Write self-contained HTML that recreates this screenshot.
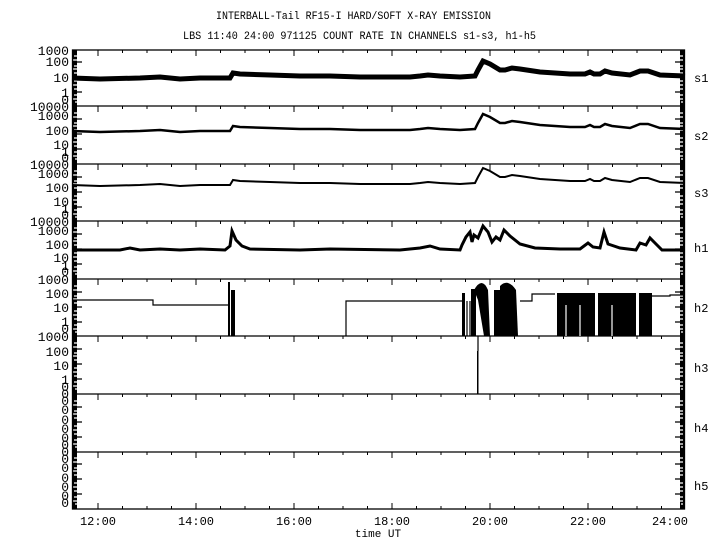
<!DOCTYPE html>
<html><head><meta charset="utf-8"><style>
html,body{margin:0;padding:0;background:#fff;width:720px;height:550px;overflow:hidden}
svg{display:block}
text{font-family:"Liberation Mono",monospace;fill:#000}
</style></head><body>
<svg width="720" height="550" viewBox="0 0 720 550" xmlns="http://www.w3.org/2000/svg">
<g font-size="11">
<text x="216" y="19" textLength="275" lengthAdjust="spacingAndGlyphs">INTERBALL-Tail RF15-I HARD/SOFT X-RAY EMISSION</text>
<text x="183" y="39" textLength="353" lengthAdjust="spacingAndGlyphs">LBS 11:40 24:00 971125  COUNT RATE IN CHANNELS s1-s3, h1-h5</text>
</g>
<!-- dense edge tick columns -->
<rect x="72" y="50" width="5" height="459" fill="#000"/>
<rect x="680" y="50" width="5" height="459" fill="#000"/>
<g stroke="#fff" stroke-width="1.2">
<path id="gp" d="M74 56h3M73 60h4M74 66h3M73 69h4M74 73h3M74 81h3M73 85h4M74 89h3M74 95h3M73 99h4M75 102h2"/>
<use href="#gp" y="57"/><use href="#gp" y="115"/><use href="#gp" y="172"/><use href="#gp" y="230"/><use href="#gp" y="287"/><use href="#gp" y="345"/><use href="#gp" y="402"/>
<use href="#gp" x="606"/><use href="#gp" x="606" y="57"/><use href="#gp" x="606" y="115"/><use href="#gp" x="606" y="172"/><use href="#gp" x="606" y="230"/><use href="#gp" x="606" y="287"/><use href="#gp" x="606" y="345"/><use href="#gp" x="606" y="402"/>
</g>
<g stroke="#000" stroke-width="1.2">
<path id="lg" d="M72 62h10M72 77h10M72 92h10M675 62h10M675 77h10M675 92h10"/>
<use href="#lg" y="57"/><use href="#lg" y="115"/><use href="#lg" y="172"/><use href="#lg" y="230"/><use href="#lg" y="287"/><use href="#lg" y="345"/><use href="#lg" y="402"/>
</g>
<g stroke="#000" stroke-width="1.3" fill="none">
<rect x="72.5" y="50" width="612" height="459"/>
<line x1="72" y1="106" x2="685" y2="106"/>
<line x1="72" y1="164" x2="685" y2="164"/>
<line x1="72" y1="221" x2="685" y2="221"/>
<line x1="72" y1="279" x2="685" y2="279"/>
<line x1="72" y1="336" x2="685" y2="336"/>
<line x1="72" y1="394" x2="685" y2="394"/>
<line x1="72" y1="452" x2="685" y2="452"/>
</g>
<g stroke="#000" stroke-width="1">
<path id="tk" d="M98 50v6M122.5 50v3M147 50v3M171.5 50v3M196 50v6M220.5 50v3M245 50v3M269.5 50v3M294 50v6M318.5 50v3M343 50v3M367.5 50v3M392 50v6M416.5 50v3M441 50v3M465.5 50v3M490 50v6M514.5 50v3M539 50v3M563.5 50v3M588 50v6M612.5 50v3M637 50v3M661.5 50v3"/>
<use href="#tk" y="56"/><use href="#tk" y="114"/><use href="#tk" y="171"/><use href="#tk" y="229"/><use href="#tk" y="286"/><use href="#tk" y="344"/><use href="#tk" y="402"/>
<path d="M98 509v-6M122.5 509v-3M147 509v-3M171.5 509v-3M196 509v-6M220.5 509v-3M245 509v-3M269.5 509v-3M294 509v-6M318.5 509v-3M343 509v-3M367.5 509v-3M392 509v-6M416.5 509v-3M441 509v-3M465.5 509v-3M490 509v-6M514.5 509v-3M539 509v-3M563.5 509v-3M588 509v-6M612.5 509v-3M637 509v-3M661.5 509v-3"/>
</g>
<defs>
<polyline id="base" fill="none" stroke="#000" points="72,0 100,1 140,0 160,-1 180,1 200,0 230,0 233,-5 240,-4 270,-3 300,-2 330,-2 360,-1 410,-1 420,-2 428,-3 440,-2 460,-1 475,-2 478,-8 483,-17 490,-14 500,-8 505,-8 512,-10 520,-9 540,-6 570,-4 585,-4 590,-6 594,-4 600,-4 605,-7 612,-5 630,-3 640,-7 648,-7 660,-3 685,-2"/>
</defs>
<use href="#base" y="78" stroke-width="5"/>
<use href="#base" y="131" stroke-width="2.5"/>
<use href="#base" y="185" stroke-width="2"/>
<polyline fill="none" stroke="#000" stroke-width="3" points="72,250 120,250 130,248 140,250 160,249 180,250 200,249 225,250 230,246 232,231 236,240 242,246 250,249 300,250 330,249 400,250 420,248 430,246 440,249 460,250 462,245 466,237 470,232 472,242 474,235 478,238 483,226 488,232 492,242 496,237 500,240 504,230 510,236 520,244 535,248 560,249 580,249 588,243 593,247 600,248 604,232 608,244 620,248 636,250 640,243 646,245 650,238 656,244 662,250 685,250"/>
<g stroke="#000" fill="none" stroke-width="1.2">
<polyline points="73,300 153,300 153,305 230,305"/>
<polyline points="346,336 346,301 462,301"/>
<polyline points="520,301 532,301 532,294 555,294"/>
<polyline points="650,296 670,296 670,295 683,295"/>
<line x1="467" y1="301" x2="467" y2="336"/><line x1="470" y1="301" x2="470" y2="336"/>
<line x1="478" y1="336" x2="478" y2="351"/>
</g>
<g fill="#000">
<rect x="228" y="282" width="2" height="54"/><rect x="231" y="290" width="4" height="46"/>
<rect x="462" y="293" width="3" height="43"/><rect x="471" y="289" width="5" height="47"/>
<path d="M474 290 Q482 276 488 290 L490 336 L484 336 L478 300 Z"/>
<rect x="494" y="290" width="6" height="46"/><path d="M500 286 Q508 278 516 290 L518 336 L500 336 Z"/>
<rect x="557" y="293" width="38" height="43"/><rect x="598" y="293" width="38" height="43"/>
<rect x="639" y="293" width="13" height="43"/>
<rect x="477" y="351" width="1.5" height="43"/>
</g>
<g stroke="#fff" stroke-width="1.2"><line x1="580" y1="305" x2="580" y2="336"/><line x1="612" y1="305" x2="612" y2="336"/><line x1="566" y1="305" x2="566" y2="336"/></g>
<g font-size="13" text-anchor="end">
<text x="69" y="55">1000</text><text x="69" y="66">100</text><text x="69" y="82">10</text><text x="69" y="97">1</text><text x="69" y="104">0</text>
<text x="69" y="111">10000</text><text x="69" y="120">1000</text><text x="69" y="135">100</text><text x="69" y="149">10</text><text x="69" y="156">1</text><text x="69" y="162">0</text>
<text x="69" y="169">10000</text><text x="69" y="178">1000</text><text x="69" y="192">100</text><text x="69" y="206">10</text><text x="69" y="213">1</text><text x="69" y="219">0</text>
<text x="69" y="226">10000</text><text x="69" y="235">1000</text><text x="69" y="249">100</text><text x="69" y="262">10</text><text x="69" y="270">1</text><text x="69" y="276">0</text>
<text x="69" y="284">1000</text><text x="69" y="298">100</text><text x="69" y="312">10</text><text x="69" y="326">1</text><text x="69" y="333">0</text>
<text x="69" y="341">1000</text><text x="69" y="356">100</text><text x="69" y="370">10</text><text x="69" y="384">1</text><text x="69" y="391">0</text>
<text x="69" y="398">0</text><text x="69" y="405">0</text><text x="69" y="414">0</text><text x="69" y="424">0</text><text x="69" y="433">0</text><text x="69" y="442">0</text><text x="69" y="449">0</text>
<text x="69" y="456">0</text><text x="69" y="463">0</text><text x="69" y="472">0</text><text x="69" y="482">0</text><text x="69" y="491">0</text><text x="69" y="500">0</text><text x="69" y="507">0</text>
</g>
<g font-size="12">
<text x="694" y="82">s1</text><text x="694" y="140">s2</text><text x="694" y="197">s3</text><text x="694" y="252">h1</text><text x="694" y="312">h2</text><text x="694" y="372">h3</text><text x="694" y="432">h4</text><text x="694" y="490">h5</text>
</g>
<g font-size="12" text-anchor="middle">
<text x="98" y="525">12:00</text><text x="196" y="525">14:00</text><text x="294" y="525">16:00</text><text x="392" y="525">18:00</text><text x="490" y="525">20:00</text><text x="588" y="525">22:00</text><text x="670" y="525">24:00</text>
<text x="378" y="537" font-size="11">time UT</text>
</g>
</svg>
</body></html>
